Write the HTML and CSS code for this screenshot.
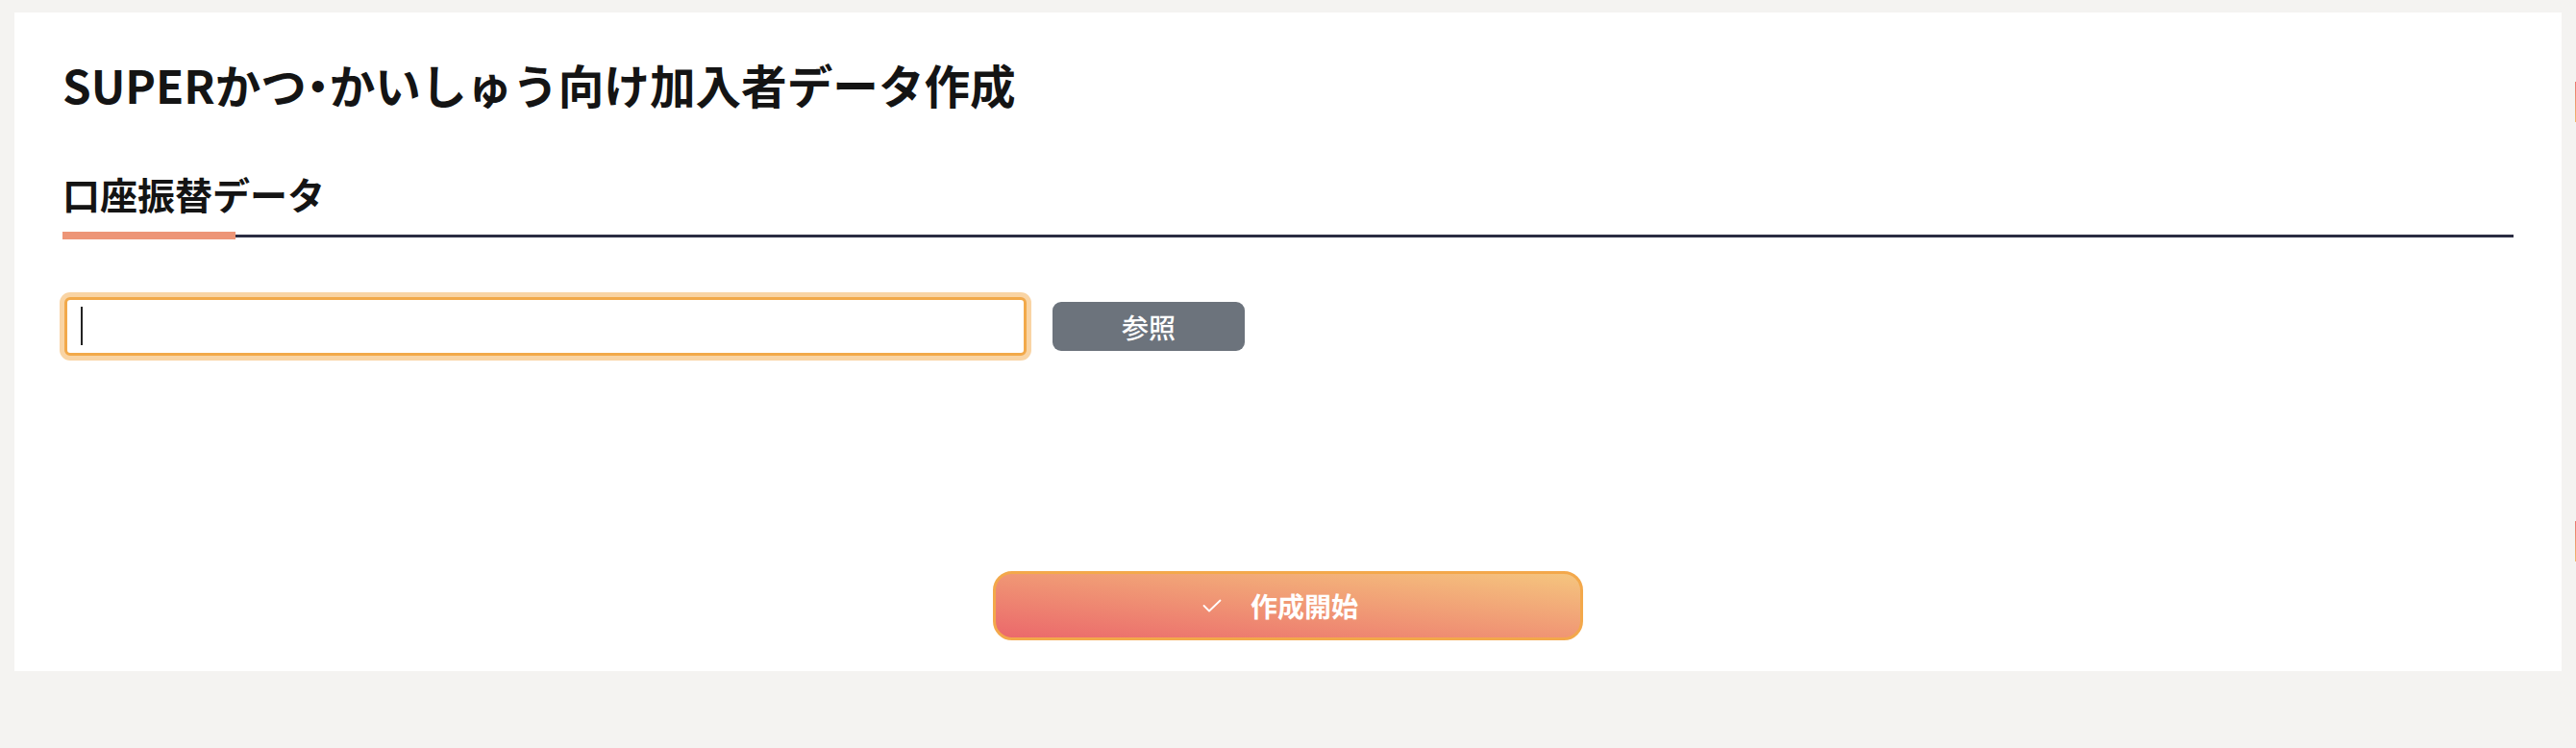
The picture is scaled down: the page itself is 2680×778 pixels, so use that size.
FILE: index.html
```html
<!DOCTYPE html>
<html lang="ja">
<head>
  <meta charset="UTF-8">
  <meta name="viewport" content="width=device-width, initial-scale=1.0">
  <title>加入者データ作成</title>
  <link rel="stylesheet" href="styles.css">
</head>
<body>
  <main class="card">
    <h1 class="page-title">SUPERかつ・かいしゅう向け加入者データ作成</h1>
    <h2 class="section-title">口座振替データ</h2>
    <div class="file-row">
      <div class="file-field">
        <input type="text" class="file-input" autofocus>
      </div>
      <button type="button" class="btn-browse">参照</button>
    </div>
    <div class="submit-row">
      <button type="button" class="btn-submit">
        <svg class="check" width="20" height="14" viewBox="0 0 20 14">
          <polyline points="1.5,7 7,12.5 18.5,1.5" fill="none" stroke="#fff" stroke-width="1.8" stroke-linecap="round" stroke-linejoin="round"/>
        </svg>
        作成開始
      </button>
    </div>
  </main>
  <div class="edge-tab edge-tab-top"></div>
  <div class="edge-tab edge-tab-bottom"></div>
</body>
</html>
```

FILE: styles.css
```css
* {
  box-sizing: border-box;
}
html {
  font-family: "Noto Sans CJK JP", "Noto Sans", sans-serif;
}
body {
  margin: 0;
  background: #f4f3f1;
  padding: 13px 15px 0;
  overflow: hidden;
  color: #141414;
}
.card {
  background: #fff;
  padding: 41px 50px 32px;
}
.page-title {
  margin: 0;
  font-size: 47.6px;
  font-weight: 700;
  line-height: 67px;
  font-feature-settings: "halt";
}
.section-title {
  position: relative;
  margin: 54px 0 0;
  padding-bottom: 16px;
  font-size: 39px;
  font-weight: 700;
  line-height: 53px;
  border-bottom: 3px solid #2b2d42;
}
.section-title::after {
  content: "";
  position: absolute;
  left: 0;
  bottom: -5px;
  width: 180px;
  height: 8px;
  background: #ed9577;
}
.file-row {
  display: flex;
  align-items: center;
  gap: 27px;
  margin-top: 62px;
  padding-left: 2px;
}
.file-field {
  position: relative;
}
/* text cursor of the focused field */
.file-field::after {
  content: "";
  position: absolute;
  left: 17px;
  top: 10px;
  width: 2px;
  height: 40px;
  background: #222;
}
.file-input {
  display: block;
  width: 1001px;
  height: 61px;
  padding: 0 16px;
  font: inherit;
  font-size: 32px;
  color: #222;
  caret-color: transparent;
  border: 3px solid #f2a94a;
  border-radius: 6px;
  box-shadow: 0 0 0 5px #f9d4a4;
  outline: none;
}
.btn-browse {
  width: 200px;
  height: 51px;
  font: inherit;
  font-size: 28px;
  font-weight: 500;
  color: #fff;
  background: #6c737c;
  border: none;
  border-radius: 9px;
  cursor: pointer;
}
.submit-row {
  display: flex;
  justify-content: center;
  margin-top: 224px;
}
.btn-submit {
  display: flex;
  align-items: center;
  justify-content: center;
  gap: 30px;
  width: 614px;
  height: 72px;
  font: inherit;
  font-size: 28px;
  font-weight: 700;
  color: #fff;
  background: linear-gradient(to top right, #eb686b, #f5c57e);
  border: 3px solid #f3a84b;
  border-radius: 20px;
  cursor: pointer;
}
.check {
  margin-left: -16px;
}
.edge-tab {
  position: absolute;
  right: 0;
  width: 1px;
  height: 42px;
  background: linear-gradient(#e9776e, #f2b86c);
}
.edge-tab-top {
  top: 85px;
}
.edge-tab-bottom {
  top: 542px;
}
```
